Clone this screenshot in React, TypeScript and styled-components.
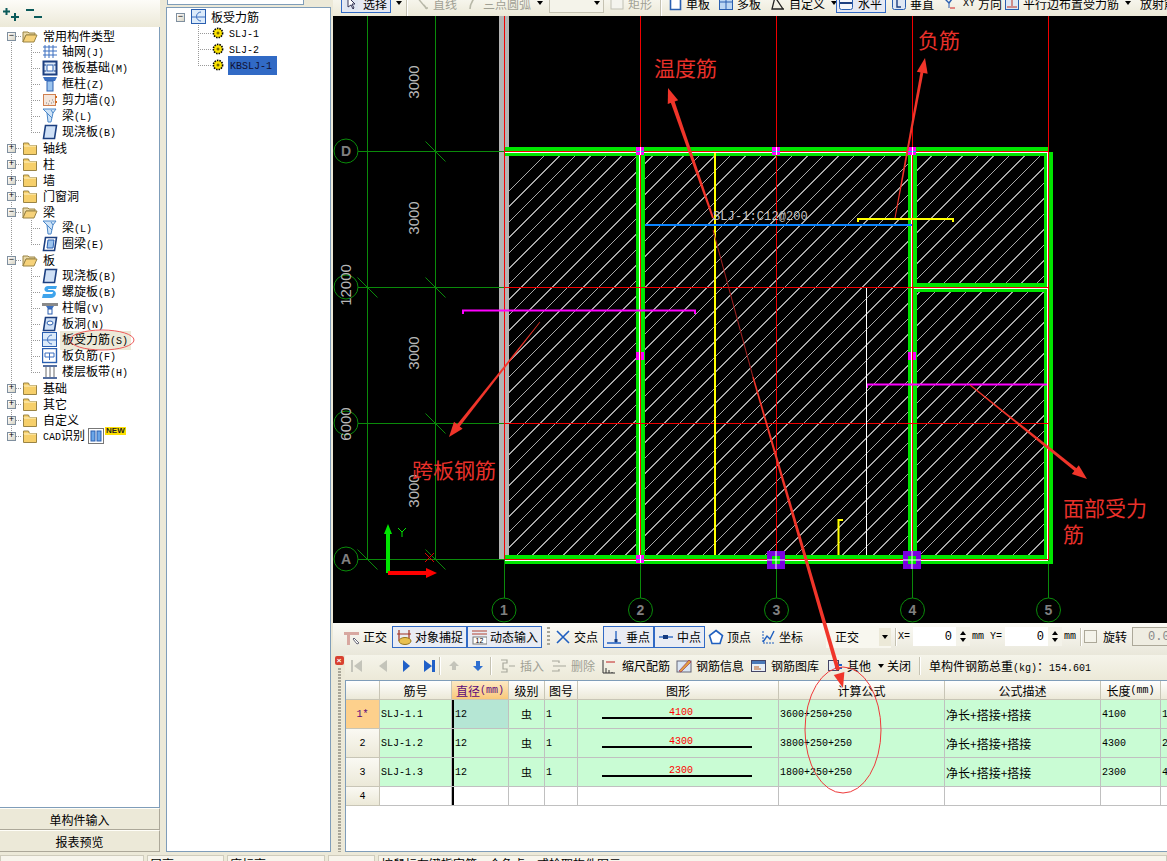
import React from 'react';
import styled, { createGlobalStyle, css } from 'styled-components';

const CJK = '"Noto Sans CJK SC", "Liberation Sans", sans-serif';

const Global = createGlobalStyle`
  html, body { margin: 0; padding: 0; background: #ece9d8; overflow: hidden; }
  body { font-family: ${CJK}; font-size: 12px; color: #000; }
`;

const Root = styled.div`
  position: relative; width: 1167px; height: 861px; overflow: hidden;
  display: flex; flex-direction: column; background: #ece9d8;
`;
const Main = styled.div`display: flex; height: 855px; flex: none;`;
const Asc = styled.span`font-family: "Liberation Mono", monospace; font-size: 10px;`;

const T = ({ s }: { s: string }) => (
  <>
    {s.split(/([\x21-\x7e]+)/).map((p, i) =>
      /[\x21-\x7e]/.test(p) ? <Asc key={i}>{p}</Asc> : <span key={i}>{p}</span>
    )}
  </>
);

/* ---------- icons ---------- */
const Svg = styled.svg`flex: none; display: block;`;
type IP = { n: string };
const Ic = ({ n }: IP) => {
  const b = '#2a5fb0', l = '#9cc4ee', d = '#1c3f80';
  let c: React.ReactNode = null;
  switch (n) {
    case 'grid': c = <path d="M3 1v13M7 1v13M11 1v13M1 3h14M1 7h14M1 11h14" stroke="#3b6fc0" fill="none" />; break;
    case 'raft': c = <><rect x="1.5" y="1.5" width="13" height="13" fill="#dfeaf8" stroke={d} strokeWidth="2" /><rect x="5" y="5" width="6" height="6" fill="#fff" stroke={b} /><path d="M1 5h3M12 5h3M1 11h3M12 11h3" stroke={d} /></>; break;
    case 'col': c = <><path d="M1 1h14l-2 4H3z" fill="#3b6fc0" /><rect x="5" y="5" width="6" height="10" fill={l} stroke={b} /></>; break;
    case 'wall': c = <><rect x="1.5" y="2.5" width="12" height="11" fill="#f4e6dc" stroke="#d08050" /><path d="M4 11h1M7 9h1M9 11h1M6 12h1M10 8h1M11 10h1" stroke="#888" /><path d="M14 4v2M14 9v2" stroke="#d06a20" strokeWidth="2" /></>; break;
    case 'beam': c = <><path d="M1 1h13l-3 4-2 9H6L5 5z" fill="#cfe4f8" stroke="#4a86c8" /><path d="M5 5l5 5M9 2l2 3" stroke="#4a86c8" /></>; break;
    case 'slab': c = <path d="M3.5 1.5h11l-2 13h-11z" fill="#cfe0f6" stroke={d} strokeWidth="1.6" />; break;
    case 'ring': c = <><path d="M3.5 1.5h11l-2 13h-11z" fill="#fff" stroke={d} strokeWidth="1.6" /><path d="M6 4h6l-1 8H5z" fill={l} stroke={b} /></>; break;
    case 'spiral': c = <path d="M15 2H6C2 2 1 7 5 8h5c2 0 1 2-1 2H1l-1 4h9c5 0 7-6 2-8H7c-2 0-1-1 0-1h7z" fill="#3fa4ec" />; break;
    case 'cap': c = <><rect x="0" y="3" width="16" height="3" fill="#8a8a8a" /><path d="M4 6h8l-2 3H6z" fill="#3b6fc0" /><rect x="6" y="9" width="4" height="5" fill="#fff" stroke={b} /></>; break;
    case 'hole': c = <><path d="M3.5 1.5h11l-2 13h-11z" fill="#cfe0f6" stroke={d} strokeWidth="1.6" /><ellipse cx="8" cy="7" rx="3" ry="2" fill="#fff" stroke={b} /></>; break;
    case 'rebar': c = <><rect x=".5" y=".5" width="14" height="14" fill="#dcebfa" stroke={b} /><path d="M1 8h13M10 3a4 4 0 1 0 0 9" fill="none" stroke="#3b6fc0" /></>; break;
    case 'neg': c = <><rect x=".5" y=".5" width="14" height="14" fill="#fff" stroke={b} strokeWidth="1.4" /><path d="M3 5h9M3 9h9M3 5v4M12 5v4M7.5 5v7" fill="none" stroke="#3b6fc0" /></>; break;
    case 'band': c = <><path d="M1 2h14M1 14h14" stroke={d} strokeWidth="1.6" /><path d="M4 3v10M8 3v10M12 3v10" stroke="#6b6b6b" /></>; break;
    case 'gear': c = <><circle cx="7" cy="8" r="4.6" fill="#ffe600" stroke="#000" strokeDasharray="1.5 1" strokeWidth="1.6" /><circle cx="7" cy="8" r="1.5" fill="#7a6a00" /></>; break;
    case 'open': c = <><path d="M1 4h5l1 1h6v2H4L1 14z" fill="#e9d9a8" stroke="#9a8445" /><path d="M4 7h11l-3 7H1z" fill="#f6d27a" stroke="#9a8445" /></>; break;
    case 'closed': c = <><path d="M1.5 5.5V3h5l1 2.500h7v9h-13z" fill="#f6cf6a" stroke="#9a8445" /><path d="M2 6h12" stroke="#fff3c6" /></>; break;
    case 'cursor': c = <><rect x="1" y="1" width="14" height="14" fill="#dfe6f2" /><path d="M5 2v10l3-2 2 4 1-1-2-4h3z" fill="#fff" stroke="#335" /></>; break;
    case 'lineGray': c = <path d="M2 1l10 12M11 13h3M10 10l3 4" stroke="#b8b8a8" strokeWidth="1.4" fill="none" />; break;
    case 'arcGray': c = <path d="M6 14c0-5 2-8 5-12" stroke="#b8b8a8" strokeWidth="1.6" fill="none" />; break;
    case 'rectGray': c = <rect x="2" y="1" width="12" height="13" fill="#f4f4ee" stroke="#c0c0b4" />; break;
    case 'one': c = <path d="M3.500 1.500h10v13h-10z" fill="#fff" stroke="#2a5fb0" strokeWidth="1.6" />; break;
    case 'multi': c = <><rect x="1.5" y="1.5" width="13" height="13" fill="#bcd6f2" stroke={b} /><path d="M8 2v12M2 7h12" stroke={b} /></>; break;
    case 'custom': c = <path d="M5 2l-3 12h12M5 2l8 12" fill="none" stroke="#222" strokeWidth="1.3" />; break;
    case 'horiz': c = <><rect x="1.5" y="1.5" width="13" height="13" rx="2" fill="#f4f6fb" stroke={b} /><path d="M2 8h12" stroke={d} strokeWidth="2" /></>; break;
    case 'vert': c = <><rect x="1.5" y="1.5" width="13" height="13" rx="2" fill="#dfe8f4" stroke={b} /><path d="M6 3v9h4" stroke={d} strokeWidth="1.4" fill="none" /></>; break;
    case 'xy': c = <><path d="M2 2l6 6M8 8l3-4" stroke="#2a5fb0" strokeWidth="1.4" fill="none" /><path d="M1 1h3M9 13h5" stroke="#d02020" /><path d="M8 8v5" stroke="#2a5fb0" /></>; break;
    case 'para': c = <><rect x="1.5" y="1.5" width="13" height="13" fill="#dfe8f4" stroke={b} /><path d="M3 4h10M3 12h10M8 5v6" stroke="#c03020" fill="none" /></>; break;
    case 'ortho': c = <><path d="M0 3h15v3H6v10H3V6H0z" fill="#d8a8a0" /><path d="M10 9l5 5-2 1-4-5z" fill="#fff" stroke="#667" /></>; break;
    case 'snap': c = <><path d="M3 1v11M13 1v11M1 5h14" stroke="#a03020" strokeWidth="1.2" /><ellipse cx="9" cy="12" rx="6" ry="3.500" fill="#e8c050" stroke="#96751c" /></>; break;
    case 'dyn': c = <><path d="M1 2h15M1 5h15" stroke="#b04030" /><rect x="2" y="8" width="14" height="7" fill="#fff" stroke="#777" /><text x="4.500" y="14.300" fontSize="7" fontFamily="Liberation Sans">12</text></>; break;
    case 'cross': c = <path d="M2 2l12 12M14 2L2 14" stroke="#1f5fc0" strokeWidth="1.6" />; break;
    case 'perp': c = <><path d="M0 14h14M9 2v12" stroke="#1f5fc0" strokeWidth="1.3" /><rect x="7.500" y="10" width="3" height="3" fill="#163b80" /></>; break;
    case 'mid': c = <><path d="M1 8h14" stroke="#1f5fc0" strokeWidth="1.3" /><rect x="5" y="6" width="5" height="4" fill="#163b80" /></>; break;
    case 'vertex': c = <path d="M8 1.500l6.500 5-2.500 8H4l-2.500-8z" fill="#fff" stroke="#1f5fc0" strokeWidth="1.6" />; break;
    case 'coord': c = <><path d="M3 2v12h12" stroke="#1f5fc0" fill="none" strokeWidth="1" strokeDasharray="2 1" /><path d="M3 13l4-6 3 3 4-8" stroke="#1f5fc0" fill="none" strokeWidth="1.4" /></>; break;
    case 'first': c = <path d="M2 2h2v12H2zM13 2v12L5 8z" fill="#c4c4ba" />; break;
    case 'prev': c = <path d="M12 2v12L4 8z" fill="#c4c4ba" />; break;
    case 'next': c = <path d="M5 2v12l7-6z" fill="#2060c8" />; break;
    case 'last': c = <path d="M3 2v12l8-6zM11 2h3v12h-3z" fill="#2060c8" />; break;
    case 'up': c = <path d="M8 3l5 5h-3v4H6V8H3z" fill="#c4c4ba" />; break;
    case 'down': c = <path d="M6 3h4v5h3l-5 5-5-5h3z" fill="#2f6fd0" />; break;
    case 'ins': c = <path d="M1 2h6v3H3v6h4v3H1M9 8h6" fill="none" stroke="#a8a89c" strokeWidth="1.2" />; break;
    case 'del': c = <path d="M1 3h7v2M1 13h7v-2M2 8h13" fill="none" stroke="#a8a89c" strokeWidth="1.2" />; break;
    case 'scale': c = <><path d="M1 2v13M1 15h12M4 15v-5M7 15v-3M10 15v-1" stroke="#333" fill="none" /><path d="M4 4h9" stroke="#c02020" /></>; break;
    case 'info': c = <><rect x="1" y="3" width="14" height="11" fill="#dbe6f4" stroke="#667" /><path d="M3 13L13 2l2 2L5 14z" fill="#e0a040" stroke="#804" strokeWidth=".5" /></>; break;
    case 'lib': c = <><rect x=".5" y="2.500" width="14" height="11" fill="#e8eef6" stroke="#446" /><rect x="1" y="3" width="13" height="3" fill="#4a78b8" /><path d="M3 9h5M3 11h7" stroke="#c06020" /></>; break;
    case 'other': c = <><rect x="1.500" y="2.500" width="10" height="10" fill="#e8eef6" stroke="#446" /><path d="M8 7h7M8 10h7" stroke="#2060c8" strokeWidth="2" /></>; break;
    case 'plan': c = <><rect x=".5" y=".5" width="15" height="15" fill="#fff" stroke="#777" /><rect x="3" y="3" width="4" height="10" fill="#6aa6e8" stroke="#2a5fb0" /><rect x="9" y="3" width="4" height="10" fill="#6aa6e8" stroke="#2a5fb0" /></>; break;
  }
  return <Svg width="16" height="16" viewBox="0 0 16 16">{c}</Svg>;
};

/* ---------- left panels ---------- */
const LeftCol = styled.div`width: 160px; margin: 0 6px 3px 0; flex: none; display: flex; flex-direction: column;`;
const TreeBar = styled.div`
  height: 27px; flex: none; display: flex; align-items: flex-start; gap: 6px; padding: 8px 0 0 3px;
  box-sizing: border-box; background: linear-gradient(#fdfcf8, #ece9d8);
`;
const TreeBox = styled.div`
  flex: 1; background: #fff; border-right: 1px solid #7f9db9; border-bottom: 1px solid #7f9db9;
  padding-top: 1px;
`;
const vDots = 'repeating-linear-gradient(to bottom, #999 0 1px, transparent 1px 2px)';
const hDots = 'repeating-linear-gradient(to right, #999 0 1px, transparent 1px 2px)';
const TreeRow = styled.div<{ $level: number; $first?: boolean; $endTrunk?: boolean; $end?: boolean }>`
  height: 16px; display: flex; align-items: center; white-space: nowrap;
  padding-left: ${p => (p.$level ? 42 : 7)}px; background-repeat: no-repeat;
  ${p => css`
    background-image: ${vDots}, ${hDots}${p.$level ? `, ${vDots}` : ''};
    background-size: 1px ${p.$endTrunk || p.$first ? '8px' : '100%'}, ${p.$level ? '10px' : '6px'} 1px${p.$level ? `, 1px ${p.$end ? '8px' : '100%'}` : ''};
    background-position: 11px ${p.$first ? '8px' : '0'}, ${p.$level ? '31px' : '16px'} 8px${p.$level ? ', 31px 0' : ''};
  `}
`;
const Expander = styled.span`
  width: 9px; height: 9px; box-sizing: border-box; border: 1px solid #7f8f9f; background: linear-gradient(135deg, #fff, #d8d4c4);
  display: flex; align-items: center; justify-content: center; flex: none; margin-right: 6px; position: relative;
  font: 9px/7px "Liberation Mono", monospace; color: #000;
`;
const Label = styled.span<{ $sel?: boolean; $ml: number }>`
  margin-left: ${p => p.$ml}px; padding: 0 3px 0 2px; line-height: 16px;
  ${p => p.$sel && 'background: #ece9d8;'}
`;
const New = styled.span`
  font: bold 8px/8px "Liberation Sans", sans-serif; background: #ffe000; color: #222; padding: 0 1px;
  align-self: flex-start; margin: -1px 0 0 1px;
`;
const SideBtn = styled.div`
  height: 22px; flex: none; display: flex; align-items: center; justify-content: center; box-sizing: border-box;
  background: #ece9d8; border-top: 1px solid #fffef8; border-bottom: 1px solid #aca899; border-right: 1px solid #aca899;
`;

const MidCol = styled.div`width: 165px; flex: none; margin-right: 2px; display: flex; flex-direction: column;`;
const MidTop = styled.div`
  height: 5px; width: 137px; margin: 0 0 2px 1px; flex: none; box-sizing: border-box; background: #fff;
  border: 1px solid #7f9db9; border-top: none;
`;
const MidTree = styled.div`flex: 1; margin-bottom: 3px; background: #fff; border: 1px solid #7f9db9; padding-top: 1px;`;
const MidRow = styled.div<{ $child?: boolean; $end?: boolean }>`
  height: 16px; display: flex; align-items: center; white-space: nowrap;
  padding-left: ${p => (p.$child ? 44 : 9)}px; background-repeat: no-repeat;
  ${p => p.$child && css`
    background-image: ${vDots}, ${hDots};
    background-size: 1px ${p.$end ? '8px' : '100%'}, 13px 1px;
    background-position: 31px 0, 31px 8px;
  `}
`;
const MidLabel = styled.span<{ $sel?: boolean; $top?: boolean }>`
  margin-left: ${p => (p.$top ? 2 : p.$sel ? 1 : 0)}px; padding: 0 ${p => (p.$sel ? 5 : 2)}px 0 2px; line-height: 16px;
  ${p => p.$sel && 'background: #316ac5; color: #101030;'}
`;

/* ---------- right ---------- */
const RightCol = styled.div`flex: 1; min-width: 0; display: flex; flex-direction: column;`;
const TopBar = styled.div`
  height: 16px; flex: none; overflow: hidden; display: flex; align-items: flex-start; padding-left: 8px;
  background: linear-gradient(#f6f5ec, #ece9d8);
`;
const TopItem = styled.div<{ $w: number; $on?: boolean; $off?: boolean; $ml?: number }>`
  width: ${p => p.$w}px; height: 20px; margin: -7px 0 0 ${p => p.$ml ?? 0}px; flex: none; box-sizing: border-box; padding-left: 2px;
  display: flex; align-items: center; gap: 3px; white-space: nowrap; color: ${p => (p.$off ? '#a0a094' : '#000')};
  ${p => p.$on && 'border: 1px solid #316ac5; background: #e6e9f2; padding-left: 1px; gap: 4px;'}
`;
const Caret = styled.span`
  width: 0; height: 0; border: 3px solid transparent; border-top: 4px solid #000; border-bottom: none; margin-left: 3px; flex: none;
`;
const Sep = styled.span<{ $ml?: number; $mr?: number; $h?: number }>`
  width: 1px; height: ${p => p.$h ?? 18}px; background: #c5c2b2; box-shadow: 1px 0 #fff; flex: none;
  margin: 0 ${p => p.$mr ?? 0}px 0 ${p => p.$ml ?? 0}px;
`;
const TopSelect = styled.div`
  width: 55px; height: 20px; margin-top: -7px; box-sizing: border-box; flex: none; background: #f4f3ea;
  border: 1px solid #c5c2b2; display: flex; align-items: center; justify-content: flex-end; padding-right: 3px;
`;
const Canvas = styled.svg`display: block; flex: none; width: 834px; height: 607px; background: #000;`;
const SnapBar = styled.div`
  height: 32px; flex: none; display: flex; align-items: center; padding-left: 4px; box-sizing: border-box; padding-bottom: 5px;
  background: linear-gradient(#fbfaf5, #e9e7da); white-space: nowrap;
`;
const Grip = styled.span<{ $ml?: number; $mr?: number }>`
  width: 3px; height: 20px; flex: none; margin: 0 ${p => p.$mr ?? 0}px 0 ${p => p.$ml ?? 0}px;
  background: repeating-linear-gradient(to bottom, #a9a698 0 2px, transparent 2px 4px);
`;
const Snap = styled.div<{ $w: number; $on?: boolean; $ml?: number }>`
  width: ${p => p.$w}px; height: 22px; box-sizing: border-box; flex: none; display: flex; align-items: center; gap: 3px;
  padding-left: 3px; margin-left: ${p => p.$ml ?? 0}px;
  ${p => p.$on && 'border: 1px solid #316ac5; background: #e9ecf4;'}
`;
const Combo = styled.div`
  width: 65px; height: 22px; margin: 0 4px 0 17px; box-sizing: border-box; flex: none; display: flex; align-items: center;
  justify-content: space-between; padding-left: 9px; background: #f8f7ef;
`;
const ComboBtn = styled.span`
  width: 12px; height: 18px; background: #ece9d8; display: flex; align-items: center; justify-content: center;
`;
const ComboCaret = styled(Caret)`margin-left: 0;`;
const Num = styled.div<{ $w: number; $ml?: number; $muted?: boolean }>`
  width: ${p => p.$w}px; height: 19px; background: #fff; flex: none; margin-left: ${p => p.$ml ?? 0}px; box-sizing: border-box;
  display: flex; align-items: center; justify-content: flex-end; padding-right: 4px;
  font-family: "Liberation Mono", monospace; font-size: 12px;
  ${p => p.$muted && 'justify-content: flex-start; padding-left: 15px; background: #efede2; border: 1px solid #aca899; color: #888; overflow: hidden;'}
`;
const Spin = styled.span`
  width: 14px; height: 19px; background: #f4f3ea; flex: none; display: flex; flex-direction: column; align-items: center; justify-content: space-around;
  padding: 2px 0; box-sizing: border-box;
`;
const Tri = styled.span<{ $up?: boolean }>`
  width: 0; height: 0; border: 3px solid transparent; ${p => (p.$up ? 'border-bottom: 4px solid #000; border-top: none;' : 'border-top: 4px solid #000; border-bottom: none;')}
`;
const Small = styled.span<{ $ml?: number; $mr?: number }>`
  font-family: "Liberation Mono", monospace; font-size: 10px; flex: none; margin: 0 ${p => p.$mr ?? 0}px 0 ${p => p.$ml ?? 0}px;
`;
const Check = styled.span`width: 11px; height: 11px; border: 1px solid #aca899; background: #f4f3ea; flex: none; margin: 0 6px 0 3px;`;

const Lower = styled.div`flex: 1; display: flex; min-height: 0;`;
const Split = styled.div`
  width: 12px; flex: none; padding-top: 1px; display: flex; flex-direction: column; align-items: center; gap: 3px;
  &::after { content: ''; width: 3px; flex: 1; margin-bottom: 3px; background: repeating-linear-gradient(to bottom, #a9a698 0 2px, transparent 2px 3px); }
`;
const Close = styled.span`
  width: 9px; height: 9px; background: #d84030; border-radius: 2px; color: #fff; font: bold 8px/9px "Liberation Sans", sans-serif; text-align: center; flex: none;
`;
const Work = styled.div`flex: 1; min-width: 0; display: flex; flex-direction: column; margin-bottom: 3px;`;
const GridBar = styled.div`
  height: 25px; flex: none; display: flex; align-items: center; white-space: nowrap; padding: 0 0 4px 4px; box-sizing: border-box;
  background: linear-gradient(#f5f4ea, #ece9d8);
`;
const GItem = styled.div<{ $w: number; $off?: boolean }>`
  width: ${p => p.$w}px; flex: none; display: flex; align-items: center; gap: 4px; color: ${p => (p.$off ? '#a0a094' : '#000')};
`;
const Sheet = styled.div`
  flex: 1; background: #fff; border: 1px solid #7f9db9; border-right: none; overflow: hidden;
  display: grid; align-content: start;
  grid-template-columns: 34px 72px 57px 36px 33px 201px 166px 156px 60px 40px;
  grid-template-rows: 19px 29px 29px 29px 19px;
`;
const Head = styled.div<{ $on?: boolean }>`
  display: flex; align-items: center; justify-content: center; white-space: nowrap; overflow: hidden;
  border-right: 1px solid #c8c5b6; border-bottom: 1px solid #c8c5b6;
  background: ${p => (p.$on ? 'linear-gradient(#fde9c4, #f9c87a)' : 'linear-gradient(#fff, #ece9d8)')};
  color: ${p => (p.$on ? '#5a0a7a' : '#000')};
`;
const RowHead = styled.div<{ $on?: boolean }>`
  display: flex; align-items: center; justify-content: center;
  border-right: 1px solid #c8c5b6; border-bottom: 1px solid #c8c5b6;
  background: ${p => (p.$on ? '#fdd08c' : 'linear-gradient(#faf9f3, #ece9d8)')};
  color: ${p => (p.$on ? '#5a0a7a' : '#000')};
`;
const Cell = styled.div<{ $fill?: string; $center?: boolean; $bar?: boolean }>`
  display: flex; align-items: center; padding-left: 1px; white-space: nowrap; overflow: hidden;
  border-right: 1px solid #c0c0c0; border-bottom: 1px solid #c0c0c0;
  background: ${p => p.$fill ?? '#c9fcd4'};
  ${p => p.$center && 'justify-content: center; padding-left: 0; font-size: 11px;'}
  ${p => p.$bar && 'box-shadow: inset 2px 0 #000; padding-left: 3px;'}
`;
const Shape = styled.div`
  width: 150px; margin-left: 23px; border-bottom: 2px solid #000; text-align: center;
  color: #f00; font: 10px/8px "Liberation Mono", monospace; padding-left: 8px; box-sizing: border-box;
`;
const Status = styled.div`height: 20px; flex: none; display: flex; gap: 3px; padding-left: 0;`;
const StatusCell = styled.div<{ $w: number }>`
  width: ${p => p.$w}px; flex: ${p => (p.$w ? 'none' : 1)}; box-sizing: border-box; padding: 0 2px; height: 20px;
  border: 1px solid #cfccbc; background: #f7f5ec; white-space: nowrap; overflow: hidden; line-height: 16px;
`;
const Overlay = styled.svg`position: absolute; left: 0; top: 0; pointer-events: none;`;

/* ---------- canvas helpers (page coordinates through viewBox) ---------- */
const GREEN = '#00e600', DK = '#0a8a0a', RED = '#f00000';
const Bubble = ({ x, y, t }: { x: number; y: number; t: string }) => (
  <g>
    <circle cx={x} cy={y} r={12} fill="none" stroke={DK} />
    <text x={x} y={y + 5} textAnchor="middle" fontFamily="Liberation Sans" fontWeight="bold" fontSize="14" fill="#808080">{t}</text>
  </g>
);
const Tick = ({ x, y }: { x: number; y: number }) => <path d={`M${x - 10} ${y - 10}L${x + 10} ${y + 10}`} stroke={DK} />;
const Dim = ({ x, y, t }: { x: number; y: number; t: string }) => (
  <text transform={`translate(${x} ${y}) rotate(-90)`} textAnchor="middle" fontFamily="Liberation Sans" fontSize="15" fill="#b8b8b8">{t}</text>
);
const Mark = ({ x, y }: { x: number; y: number }) => (
  <g>
    <rect x={x - 4} y={y - 4} width={8} height={8} fill="#ff00ff" />
    <path d={`M${x - 4} ${y + .5}h8`} stroke="#00d0d0" />
    <path d={`M${x + .5} ${y - 4}v8`} stroke="#fff" />
  </g>
);
const Big = ({ x, y }: { x: number; y: number }) => (
  <g>
    <rect x={x - 9} y={y - 9} width={18} height={18} fill="#7a00e0" />
    <rect x={x - 4} y={y - 4} width={8} height={8} fill="#00e600" />
    <path d={`M${x - 9} ${y}h18M${x} ${y - 9}v18`} stroke="#fff" />
  </g>
);

const hatch = (() => {
  let d = '';
  for (let s = 600; s < 1620; s += 15.5) d += `M${s - 460} 560L${s} 100`;
  return d;
})();

const Canvasing = () => (
  <Canvas viewBox="333 16 834 607">
    <defs>
      <clipPath id="hc">
        <rect x="509" y="156" width="127" height="399" />
        <rect x="645" y="156" width="263" height="399" />
        <rect x="917" y="156" width="127" height="127" />
        <rect x="917" y="292" width="127" height="263" />
      </clipPath>
    </defs>
    <g clipPath="url(#hc)">
      <path d={hatch} stroke="#a8a8a8" shapeRendering="crispEdges" fill="none" />
    </g>

    <rect x="499" y="16" width="10" height="543" fill="#b4b4b4" />
    <path d="M367.500 16V559.500M435.500 16V559.500" stroke={DK} />
    <path d="M358 151.500H505M358 287.500H505M358 423.500H505M358 559.500H505" stroke={DK} />
    <path d="M504.500 559V598M640.500 559V598M776.500 559V598M912.500 559V598M1048.500 559V598" stroke={DK} />
    <Tick x={435.5} y={151.5} /><Tick x={367.5} y={287.5} /><Tick x={435.5} y={287.5} />
    <Tick x={435.5} y={423.5} /><Tick x={367.5} y={559.5} /><Tick x={435.5} y={559.5} />

    {/* walls */}
    <g fill={GREEN}>
      <rect x="504" y="147" width="545" height="4" />
      <rect x="505" y="153" width="540" height="3" />
      <rect x="505" y="555" width="544" height="4" />
      <rect x="505" y="561" width="544" height="3" />
      <rect x="636" y="153" width="3" height="402" />
      <rect x="641" y="153" width="4" height="402" />
      <rect x="908" y="153" width="3" height="402" />
      <rect x="913" y="153" width="4" height="402" />
      <rect x="1044" y="153" width="3" height="402" />
      <rect x="1049" y="152" width="4" height="412" />
      <rect x="917" y="283" width="130" height="4" />
      <rect x="913" y="289" width="134" height="3" />
    </g>
    <path d="M505 152.500H1048M505 560.500H1048M639.500 153V559M911.500 153V559M1047.500 153V559M914 288.500H1047" stroke="#fff" />
    <path d="M504.500 16V559M640.500 16V559M776.500 16V559M912.500 16V559M1048.500 16V559M505 151.500H1049M505 287.500H1049M505 423.500H1049M505 559.500H1049" stroke={RED} />

    <rect x="714" y="153" width="2" height="402" fill="#ffff00" />
    <rect x="645" y="224" width="267" height="2" fill="#0a84ff" />
    <path d="M858 222v-3h95v3" fill="none" stroke="#ffff00" strokeWidth="2" />
    <path d="M463 314v-3.500h232v3.500" fill="none" stroke="#ff00ff" strokeWidth="2" />
    <path d="M867 388v-3.500h180" fill="none" stroke="#ff00ff" strokeWidth="2" />
    <path d="M866.500 288V555" stroke="#fff" />
    <path d="M843 520h-4.500v35" fill="none" stroke="#ffff00" strokeWidth="2" />

    <Mark x={640} y={151} /><Mark x={776} y={151} /><Mark x={912} y={151} />
    <rect x="636" y="352" width="3" height="8" fill="#ff00ff" /><rect x="641" y="352" width="3" height="8" fill="#ff00ff" />
    <rect x="908" y="352" width="3" height="8" fill="#ff00ff" /><rect x="913" y="352" width="3" height="8" fill="#ff00ff" />
    <Mark x={640} y={559} />
    <Big x={776} y={560} /><Big x={912} y={560} />

    <text x="713" y="220" fontFamily="Liberation Mono" fontSize="12" fill="#c8c8c8" letterSpacing=".1">SLJ-1:C12@200</text>

    <Dim x={419} y={82} t="3000" /><Dim x={419} y={218} t="3000" /><Dim x={419} y={353} t="3000" /><Dim x={419} y={491} t="3000" />
    <Bubble x={346} y={151} t="D" /><Bubble x={346} y={287} t="" /><Bubble x={346} y={423} t="" /><Bubble x={346} y={559} t="A" />
    <Dim x={351} y={285} t="12000" /><Dim x={351} y={424} t="6000" />
    <Bubble x={504} y={610} t="1" /><Bubble x={640.5} y={610} t="2" /><Bubble x={776.5} y={610} t="3" /><Bubble x={912.5} y={610} t="4" /><Bubble x={1048.5} y={610} t="5" />

    {/* axis */}
    <path d="M386 573V534h-2l4-10 4 10h-2v39z" fill={GREEN} />
    <path d="M388 571h38v-3l11 5-11 5v-3h-38z" fill="#ff0000" />
    <path d="M398 528l4 4 4-4M402 532v5" stroke={GREEN} fill="none" />
    <path d="M425 553l9 9M434 553l-9 9" stroke="#e00000" />
  </Canvas>
);

const taper = (x1: number, y1: number, x2: number, y2: number, w1: number, w2: number, fill: string, k: string) => {
  const dx = x2 - x1, dy = y2 - y1, l = Math.hypot(dx, dy), nx = -dy / l, ny = dx / l;
  const pts = [
    [x1 + nx * w1 / 2, y1 + ny * w1 / 2], [x2 + nx * w2 / 2, y2 + ny * w2 / 2],
    [x2 - nx * w2 / 2, y2 - ny * w2 / 2], [x1 - nx * w1 / 2, y1 - ny * w1 / 2],
  ].map(p => p.join(',')).join(' ');
  return <polygon key={k} points={pts} fill={fill} />;
};
const head = (tx: number, ty: number, fx: number, fy: number, k: string) => {
  const dx = tx - fx, dy = ty - fy, l = Math.hypot(dx, dy), ux = dx / l, uy = dy / l;
  const b = [tx - ux * 15, ty - uy * 15];
  const pts = [[tx, ty], [b[0] - uy * 5.5, b[1] + ux * 5.5], [b[0] + uy * 5.5, b[1] - ux * 5.5]].map(p => p.join(',')).join(' ');
  return <polygon key={k} points={pts} fill="#f0352a" />;
};
const Note = ({ x, y, t }: { x: number; y: number; t: string }) => (
  <text x={x} y={y} fontFamily={CJK} fontSize="21" fill="#e8302a">{t}</text>
);
const Marks = () => {
  const r = '#f0352a';
  return (
    <Overlay width="1167" height="861" viewBox="0 0 1167 861">
      {taper(672, 100, 713, 218, 4, 2, r, 'a1')}
      {taper(713, 230, 753, 377, 1, 1, '#a02020', 'a2')}
      {taper(753, 377, 838, 670, 1.500, 4, r, 'a3')}
      {head(668, 88, 716, 225, 'h1')}
      {head(843, 688, 830, 640, 'h2')}
      {taper(895, 218, 922, 72, 1, 3, r, 'b1')}
      {head(925, 58, 895, 218, 'h3')}
      {taper(540, 322, 458, 426, .6, 3.500, r, 'c1')}
      {head(449, 437, 540, 322, 'h4')}
      {taper(970, 385, 1076, 470, 1, 3.500, r, 'd1')}
      {head(1087, 479, 970, 385, 'h5')}
      <Note x={654} y={76} t="温度筋" />
      <Note x={918} y={48} t="负筋" />
      <Note x={412} y={478} t="跨板钢筋" />
      <Note x={1063} y={516} t="面部受力" />
      <Note x={1063} y={542} t="筋" />
      <ellipse cx="843" cy="730" rx="38" ry="63" fill="none" stroke="#ee3a3a" />
      <ellipse cx="102" cy="340" rx="32" ry="10" fill="none" stroke="#ee5a5a" />
    </Overlay>
  );
};

/* ---------- data ---------- */
type Node = { t: string; open?: boolean; kids?: [string, string][] };
const tree: Node[] = [
  { t: '常用构件类型', open: true, kids: [['grid', '轴网(J)'], ['raft', '筏板基础(M)'], ['col', '框柱(Z)'], ['wall', '剪力墙(Q)'], ['beam', '梁(L)'], ['slab', '现浇板(B)']] },
  { t: '轴线' }, { t: '柱' }, { t: '墙' }, { t: '门窗洞' },
  { t: '梁', open: true, kids: [['beam', '梁(L)'], ['ring', '圈梁(E)']] },
  { t: '板', open: true, kids: [['slab', '现浇板(B)'], ['spiral', '螺旋板(B)'], ['cap', '柱帽(V)'], ['hole', '板洞(N)'], ['rebar', '板受力筋(S)'], ['neg', '板负筋(F)'], ['band', '楼层板带(H)']] },
  { t: '基础' }, { t: '其它' }, { t: '自定义' }, { t: 'CAD识别' },
];
const rows = [
  ['1*', 'SLJ-1.1', '4100', '3600+250+250'],
  ['2', 'SLJ-1.2', '4300', '3800+250+250'],
  ['3', 'SLJ-1.3', '2300', '1800+250+250'],
];

export default function App() {
  return (
    <Root>
      <Global />
      <Main>
        <LeftCol>
          <TreeBar>
            <Svg width="17" height="14" viewBox="0 0 17 14"><path d="M3.500 0v7M0 3.500h7M12 5v8M8 9h8" stroke="#0b5a5a" strokeWidth="2" fill="none" /></Svg>
            <Svg width="17" height="14" viewBox="0 0 17 14"><path d="M0 2h8M8 9h8" stroke="#0b5a5a" strokeWidth="2" fill="none" /></Svg>
          </TreeBar>
          <TreeBox>
            {tree.map((n, i) => (
              <React.Fragment key={n.t}>
                <TreeRow $level={0} $first={i === 0} $endTrunk={i === tree.length - 1}>
                  <Expander>{n.open ? '−' : '+'}</Expander>
                  <Ic n={n.open ? 'open' : 'closed'} />
                  <Label $ml={3}><T s={n.t} /></Label>
                  {n.t === 'CAD识别' && <><Ic n="plan" /><New>NEW</New></>}
                </TreeRow>
                {n.kids?.map(([ic, t], j) => (
                  <TreeRow key={t} $level={1} $end={j === n.kids!.length - 1}>
                    <Ic n={ic} />
                    <Label $ml={2} $sel={t === '板受力筋(S)'}><T s={t} /></Label>
                  </TreeRow>
                ))}
              </React.Fragment>
            ))}
          </TreeBox>
          <SideBtn>单构件输入</SideBtn>
          <SideBtn>报表预览</SideBtn>
        </LeftCol>

        <MidCol>
          <MidTop />
          <MidTree>
            <MidRow>
              <Expander>−</Expander>
              <Ic n="rebar" />
              <MidLabel $top>板受力筋</MidLabel>
            </MidRow>
            {['SLJ-1', 'SLJ-2', 'KBSLJ-1'].map((s, i) => (
              <MidRow key={s} $child $end={i === 2}>
                <Ic n="gear" />
                <MidLabel $sel={i === 2}><T s={s} /></MidLabel>
              </MidRow>
            ))}
          </MidTree>
        </MidCol>

        <RightCol>
          <TopBar>
            <TopItem $w={50} $on><Ic n="cursor" />选择</TopItem>
            <TopItem $w={12}><Caret /></TopItem>
            <Sep $ml={3} $mr={5} />
            <TopItem $w={50} $off><Ic n="lineGray" />直线</TopItem>
            <TopItem $w={87} $off><Ic n="arcGray" />三点圆弧<Caret /></TopItem>
            <TopSelect><Caret /></TopSelect>
            <TopItem $w={53} $ml={3} $off><Ic n="rectGray" />矩形</TopItem>
            <Sep $mr={4} />
            <TopItem $w={51}><Ic n="one" />单板</TopItem>
            <TopItem $w={52}><Ic n="multi" />多板</TopItem>
            <TopItem $w={68}><Ic n="custom" />自定义<Caret /></TopItem>
            <TopItem $w={50} $on><Ic n="horiz" />水平</TopItem>
            <TopItem $w={50} $ml={3}><Ic n="vert" />垂直</TopItem>
            <TopItem $w={63}><Ic n="xy" /><T s="XY方向" /></TopItem>
            <TopItem $w={136}><Ic n="para" />平行边布置受力筋<Caret /></TopItem>
            <TopItem $w={60}>放射筋</TopItem>
          </TopBar>
          <Canvasing />
          <SnapBar>
            <Snap $w={51} $ml={4}><Ic n="ortho" />正交</Snap>
            <Snap $w={75} $on><Ic n="snap" />对象捕捉</Snap>
            <Snap $w={75} $on><Ic n="dyn" />动态输入</Snap>
            <Grip $ml={5} $mr={2} />
            <Snap $w={51}><Ic n="cross" />交点</Snap>
            <Snap $w={51} $on><Ic n="perp" />垂点</Snap>
            <Snap $w={51} $on><Ic n="mid" />中点</Snap>
            <Snap $w={52}><Ic n="vertex" />顶点</Snap>
            <Snap $w={52}><Ic n="coord" />坐标</Snap>
            <Combo>正交<ComboBtn><ComboCaret /></ComboBtn></Combo>
            <Sep $mr={2} />
            <Small $mr={3}>X=</Small>
            <Num $w={43}>0</Num><Spin><Tri $up /><Tri /></Spin>
            <Small $ml={2} $mr={6}>mm</Small>
            <Small $mr={3}>Y=</Small>
            <Num $w={43}>0</Num><Spin><Tri $up /><Tri /></Spin>
            <Small $ml={2} $mr={4}>mm</Small>
            <Sep />
            <Check />
            旋转
            <Num $w={40} $ml={5} $muted>0.00</Num>
          </SnapBar>
          <Lower>
            <Split><Close>×</Close></Split>
            <Work>
              <GridBar>
                <GItem $w={26} $off><Ic n="first" /></GItem>
                <GItem $w={23} $off><Ic n="prev" /></GItem>
                <GItem $w={23}><Ic n="next" /></GItem>
                <GItem $w={18}><Ic n="last" /></GItem>
                <Sep $mr={6} />
                <GItem $w={24} $off><Ic n="up" /></GItem>
                <GItem $w={20}><Ic n="down" /></GItem>
                <Sep $mr={9} />
                <GItem $w={51} $off><Ic n="ins" />插入</GItem>
                <GItem $w={51} $off><Ic n="del" />删除</GItem>
                <GItem $w={74}><Ic n="scale" />缩尺配筋</GItem>
                <GItem $w={75}><Ic n="info" />钢筋信息</GItem>
                <GItem $w={76}><Ic n="lib" />钢筋图库</GItem>
                <GItem $w={60}><Ic n="other" />其他<Caret /></GItem>
                <GItem $w={32}>关闭</GItem>
                <Sep $mr={9} />
                <span><T s="单构件钢筋总重(kg)：154.601" /></span>
              </GridBar>
              <Sheet>
                <Head />
                <Head>筋号</Head>
                <Head $on><T s="直径(mm)" /></Head>
                <Head>级别</Head>
                <Head>图号</Head>
                <Head>图形</Head>
                <Head>计算公式</Head>
                <Head>公式描述</Head>
                <Head><T s="长度(mm)" /></Head>
                <Head />
                {rows.map((r, i) => (
                  <React.Fragment key={r[0]}>
                    <RowHead $on={i === 0}><Asc>{r[0]}</Asc></RowHead>
                    <Cell><Asc>{r[1]}</Asc></Cell>
                    <Cell $bar $fill={i === 0 ? '#b5e6d4' : undefined}><Asc>12</Asc></Cell>
                    <Cell $center>虫</Cell>
                    <Cell><Asc>1</Asc></Cell>
                    <Cell><Shape>{r[2]}</Shape></Cell>
                    <Cell><Asc>{r[3]}</Asc></Cell>
                    <Cell>净长+搭接+搭接</Cell>
                    <Cell><Asc>{r[2]}</Asc></Cell>
                    <Cell><Asc>{['1', '2', '4'][i]}</Asc></Cell>
                  </React.Fragment>
                ))}
                <RowHead><Asc>4</Asc></RowHead>
                <Cell $fill="#fff" />
                <Cell $fill="#fff" $bar />
                <Cell $fill="#fff" /><Cell $fill="#fff" /><Cell $fill="#fff" /><Cell $fill="#fff" /><Cell $fill="#fff" /><Cell $fill="#fff" /><Cell $fill="#fff" />
              </Sheet>
            </Work>
          </Lower>
        </RightCol>
      </Main>
      <Status>
        <StatusCell $w={144} />
        <StatusCell $w={77}>层高:</StatusCell>
        <StatusCell $w={98}>底标高:</StatusCell>
        <StatusCell $w={47}><T s="- -" /></StatusCell>
        <StatusCell $w={0}>按鼠标左键指定第一个角点，或拾取构件图元</StatusCell>
      </Status>
      <Marks />
    </Root>
  );
}
